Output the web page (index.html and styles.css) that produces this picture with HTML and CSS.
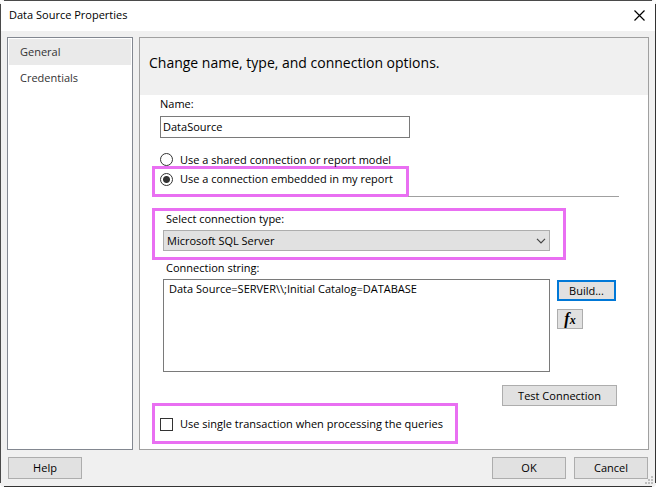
FILE: index.html
```html
<!DOCTYPE html>
<html lang="en">
<head>
    <meta charset="UTF-8">
    <meta name="viewport" content="width=device-width, initial-scale=1.0">
    <title>Data Source Properties</title>
    <link rel="stylesheet" href="styles.css">
</head>
<body>
    <form class="window">
        <header class="title-bar">
            <h1>Data Source Properties</h1>
            <button type="button" class="close" aria-label="Close">
                <svg width="11" height="11" viewBox="0 0 11 11"><path d="M.5 .5l10 10M10.5 .5l-10 10" stroke="#000" stroke-width="1.2" fill="none"/></svg>
            </button>
        </header>

        <div class="content">
            <nav class="sidebar">
                <a href="#general" class="active">General</a>
                <a href="#credentials">Credentials</a>
            </nav>

            <main class="panel" id="general">
                <h2>Change name, type, and connection options.</h2>

                <div class="fields">
                    <div class="name-group">
                        <label for="name">Name:</label>
                        <input type="text" id="name" name="name" value="DataSource">
                    </div>

                    <label class="option shared"><input type="radio" name="connection" value="shared">Use a shared connection or report model</label>
                    <div class="highlight embedded">
                        <label class="option"><input type="radio" name="connection" value="embedded" checked>Use a connection embedded in my report</label>
                    </div>
                    <hr>

                    <div class="highlight type-group">
                        <label for="type">Select connection type:</label>
                        <div class="select-box">
                            <select id="type" name="type">
                                <option>Microsoft SQL Server</option>
                            </select>
                            <svg class="arrow" width="10" height="6" viewBox="0 0 10 6"><path d="M1 .8l4 4 4-4" stroke="#444" stroke-width="1.2" fill="none"/></svg>
                        </div>
                    </div>

                    <div class="string-group">
                        <label for="string">Connection string:</label>
                        <div class="string-row">
                            <textarea id="string" name="string" spellcheck="false">Data Source=SERVER\\;Initial Catalog=DATABASE</textarea>
                            <div class="string-buttons">
                                <button type="button" class="btn build">Build...</button>
                                <button type="button" class="btn fx" aria-label="Expression"><i>f</i><i class="sub">x</i></button>
                            </div>
                        </div>
                    </div>

                    <div class="bottom-row">
                        <div class="highlight transaction">
                            <label class="option"><input type="checkbox" name="transaction">Use single transaction when processing the queries</label>
                        </div>
                        <button type="button" class="btn test">Test Connection</button>
                    </div>
                </div>
            </main>
        </div>

        <footer class="footer">
            <button type="button" class="btn help">Help</button>
            <button type="submit" class="btn">OK</button>
            <button type="button" class="btn">Cancel</button>
        </footer>
        <svg class="grip" width="8" height="8" viewBox="0 0 8 8"><path d="M6 0h2v2h-2zM3 3h2v2h-2zM6 3h2v2h-2zM0 6h2v2h-2zM3 6h2v2h-2zM6 6h2v2h-2z" fill="#bfbfbf"/></svg>
    </form>
</body>
</html>
```
FILE: styles.css
```css
* {
    box-sizing: border-box;
}

body {
    margin: 0;
    background-color: white;
    color: #000;
    font-family: "Open Sans", "Noto Sans", sans-serif;
    font-size: 11px;
    line-height: 16px;
}

input,
select,
textarea,
button {
    margin: 0;
    font: inherit;
    color: inherit;
}

/* the frame lines stop short of the rounded corners */
.window {
    position: relative;
    display: flex;
    flex-direction: column;
    min-height: 100vh;
    padding: 1px;
    border-radius: 4px;
    background:
        linear-gradient(#4a4a4a, #4a4a4a) 4px 0 / calc(100% - 8px) 1px no-repeat,
        linear-gradient(#333, #333) 4px 100% / calc(100% - 8px) 1px no-repeat,
        linear-gradient(#4a4a4a, #4a4a4a) 0 4px / 1px calc(100% - 8px) no-repeat,
        linear-gradient(#333, #333) 100% 4px / 1px calc(100% - 8px) no-repeat,
        #f0f0f0;
}

.title-bar {
    display: flex;
    align-items: center;
    justify-content: space-between;
    height: 30px;
    padding: 0 10px 2px 8px;
    background-color: white;
}

h1 {
    margin: 0;
    font-size: 11px;
    font-weight: normal;
}

.close {
    display: flex;
    padding: 0;
    border: none;
    background: none;
}

.content {
    display: flex;
    flex: 1;
    gap: 6px;
    padding: 6px 6px 0;
}

.sidebar {
    width: 126px;
    padding: 1px;
    border: 1px solid #828790;
    background-color: white;
}

.sidebar a {
    display: block;
    padding: 5px 11px;
    color: #333;
    text-decoration: none;
}

.sidebar a.active {
    background-color: #eaeaea;
}

.panel {
    flex: 1;
    border: 1px solid #a0a0a0;
    background-color: white;
}

h2 {
    margin: 0;
    padding: 13px 9px 20px;
    background-color: #f0f0f0;
    font-size: 14px;
    font-weight: normal;
    line-height: 24px;
}

.fields {
    padding: 1px 0 5px 12px;
}

.name-group {
    width: 258px;
    padding-left: 8px;
}

.name-group label {
    display: block;
    margin-bottom: 4px;
}

.name-group input {
    display: block;
    width: 100%;
    height: 22px;
    padding: 0 2px 2px;
    border: 1px solid #7a7a7a;
}

.option {
    display: flex;
    align-items: center;
    gap: 7px;
}

.option input {
    flex: none;
    appearance: none;
    width: 13px;
    height: 13px;
    border: 1px solid #333;
    background-color: white;
}

.option input[type="radio"] {
    border-radius: 50%;
}

.option input[type="radio"]:checked {
    background: radial-gradient(circle, #333 3px, white 4px);
}

.shared {
    height: 13px;
    margin: 15px 0 0 8px;
}

.highlight {
    border: 3px solid #e96ff2;
}

.embedded {
    width: fit-content;
    padding: 2px 13px 7px 5px;
}

hr {
    height: 1px;
    margin: -1px 29px 11px 256px;
    border: none;
    background-color: #a0a0a0;
}

.type-group {
    margin-right: 82px;
    padding: 0 13px 6px 8px;
}

.type-group label,
.string-group label {
    display: block;
    margin-bottom: 3px;
    padding-left: 3px;
}

.select-box {
    position: relative;
}

.select-box select {
    display: block;
    appearance: none;
    width: 100%;
    height: 21px;
    padding: 0 3px;
    border: 1px solid #adadad;
    border-radius: 0;
    background-color: #e1e1e1;
}

.arrow {
    position: absolute;
    top: 8px;
    right: 4px;
    pointer-events: none;
}

.string-group {
    margin: 0 32px 13px 11px;
}

.string-row {
    display: flex;
    gap: 7px;
}

.string-row textarea {
    flex: 1;
    height: 93px;
    padding: 1px 5px;
    border: 1px solid #7a7a7a;
    resize: none;
}

.string-buttons {
    display: flex;
    flex-direction: column;
    gap: 8px;
    padding-top: 1px;
}

.btn {
    width: 74px;
    height: 22px;
    padding: 0;
    border: 1px solid #adadad;
    background-color: #e1e1e1;
}

.build {
    width: 59px;
    height: 21px;
    border: 2px solid #0078d7;
}

.fx {
    width: 26px;
    height: 20px;
    font-family: "Liberation Serif", serif;
    font-size: 16px;
    font-weight: bold;
    line-height: 14px;
}

.fx .sub {
    font-size: 12px;
}

.bottom-row {
    display: flex;
    align-items: flex-start;
    justify-content: space-between;
    padding-right: 31px;
}

.transaction {
    margin-top: 18px;
    padding: 10px 12px 9px 5px;
}

.test {
    width: 115px;
    height: 21px;
}

.footer {
    display: flex;
    gap: 8px;
    padding: 7px;
}

.help {
    margin-right: auto;
}

.grip {
    position: absolute;
    right: 3px;
    bottom: 3px;
}
```
